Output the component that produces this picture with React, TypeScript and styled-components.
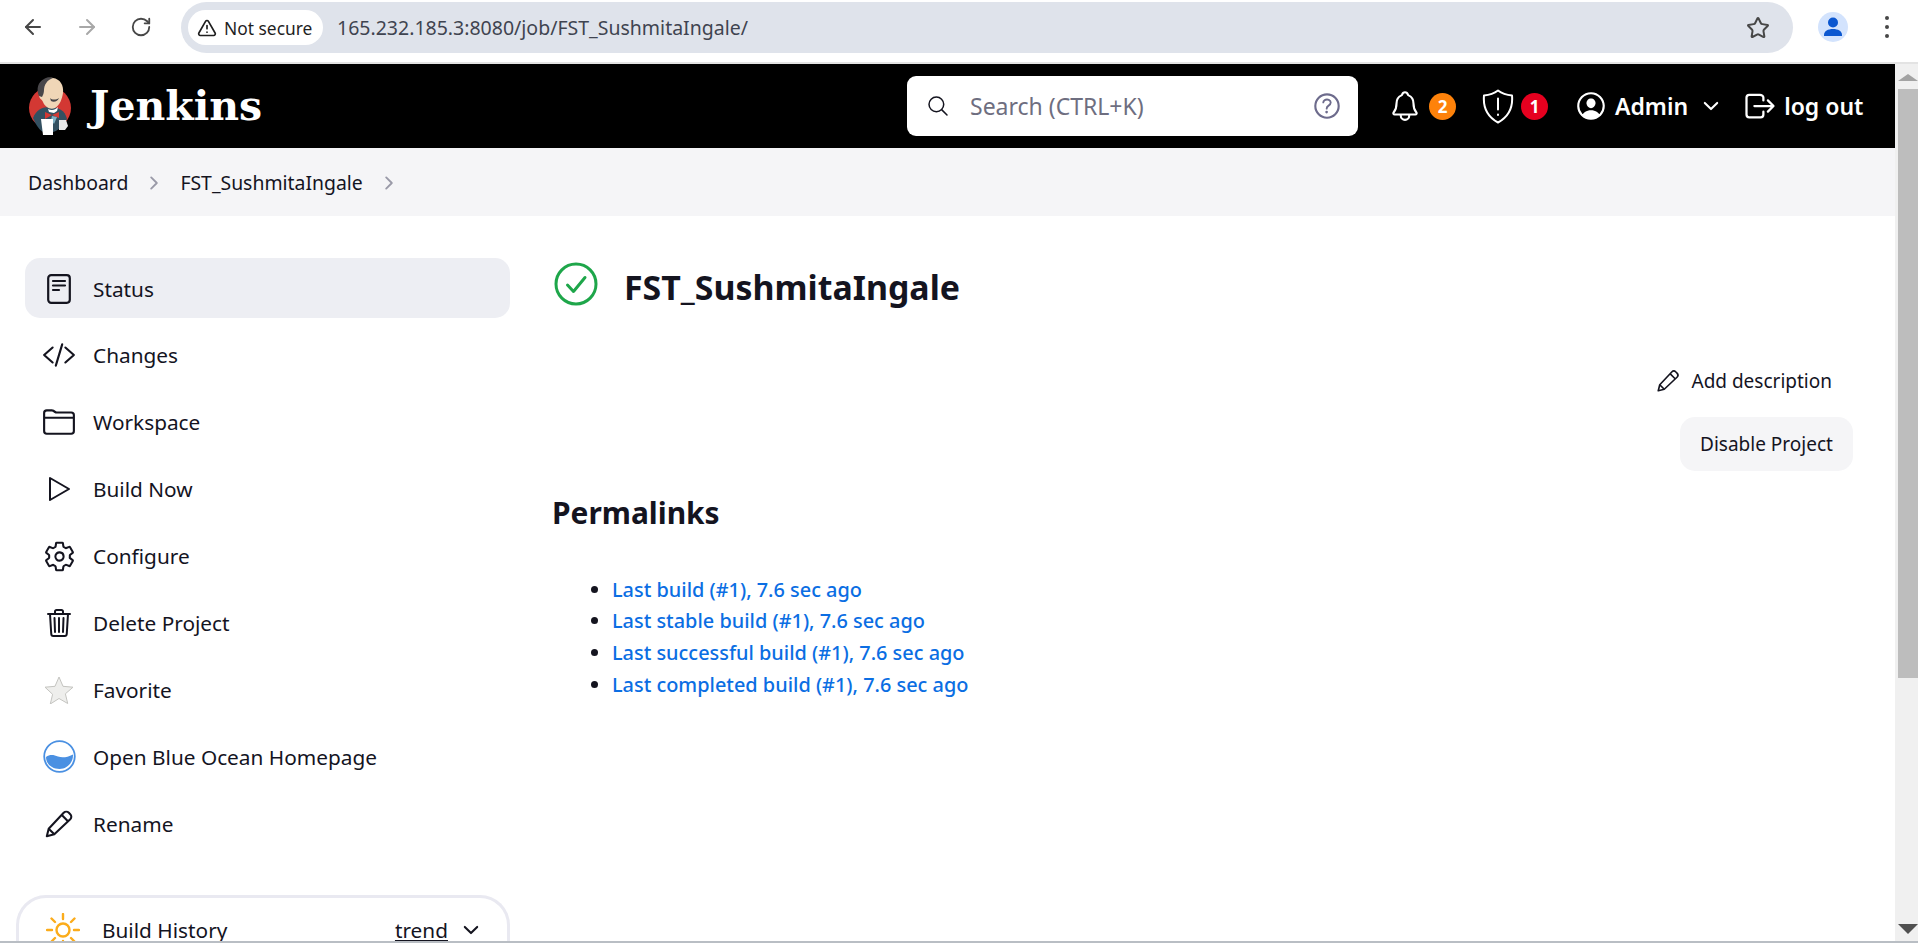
import React from "react";
import styled, { createGlobalStyle } from "styled-components";
import {
  IoChevronDownOutline,
  IoChevronForwardOutline,
  IoCodeSlashOutline,
  IoFolderOutline,
  IoHelpCircleOutline,
  IoLogOutOutline,
  IoNotificationsOutline,
  IoPersonCircleOutline,
  IoSearchOutline,
  IoSettingsOutline,
  IoTrashOutline,
} from "react-icons/io5";
import { ArrowLeft, ArrowRight, RotateCw, Star, TriangleAlert } from "lucide-react";

const GlobalStyle = createGlobalStyle`
  html, body {
    margin: 0;
    height: 943px;
    overflow: hidden;
    background: #fff;
  }
  body {
    font-family: "Noto Sans", "Open Sans", sans-serif;
    color: #14141f;
  }
`;

const Page = styled.div`
  display: flex;
  flex-direction: column;
  width: 1918px;
  height: 943px;
  overflow: hidden;
`;

const BrowserBar = styled.div`
  flex: none;
  display: flex;
  align-items: flex-start;
  height: 62px;
  border-bottom: 2px solid #e3e3e3;
  background: #fff;
`;

const NavButton = styled.div<{ $off?: boolean }>`
  flex: none;
  display: flex;
  align-items: center;
  justify-content: center;
  width: 54px;
  height: 54px;
  color: ${(p) => (p.$off ? "#a8a8a8" : "#474747")};
`;

const NavGroup = styled.div`
  display: flex;
  padding-left: 6px;
  width: 181px;
  flex: none;
  box-sizing: border-box;
`;

const Omnibox = styled.div`
  flex: none;
  display: flex;
  align-items: center;
  width: 1612px;
  height: 51px;
  margin-top: 2px;
  padding: 0 23px 0 7px;
  box-sizing: border-box;
  border-radius: 26px;
  background: #dfe3eb;
`;

const SecureChip = styled.div`
  flex: none;
  display: flex;
  align-items: center;
  gap: 7px;
  height: 35px;
  width: 135px;
  padding-left: 9px;
  box-sizing: border-box;
  border-radius: 18px;
  background: #fff;
  font-size: 17.4px;
  color: #1f1f1f;
`;

const UrlText = styled.div`
  flex: 1;
  margin-left: 14px;
  font-size: 19.5px;
  color: #3f4450;
`;

const ProfileSlot = styled.div`
  flex: none;
  display: flex;
  align-items: center;
  width: 125px;
  height: 54px;
  padding-left: 25px;
  box-sizing: border-box;
`;

const Avatar = styled.div`
  width: 30px;
  height: 30px;
  border-radius: 50%;
  background: #d3e3fd;
`;

const Dots = styled.div`
  display: flex;
  flex-direction: column;
  gap: 5px;
  margin-left: 37px;
`;

const Dot = styled.span`
  width: 4px;
  height: 4px;
  border-radius: 50%;
  background: #474747;
`;

const Viewport = styled.div`
  flex: 1;
  display: flex;
  min-height: 0;
`;

const Site = styled.div`
  flex: none;
  width: 1895px;
  display: flex;
  flex-direction: column;
  overflow: hidden;
`;

const Scrollbar = styled.div`
  flex: none;
  width: 23px;
  display: flex;
  flex-direction: column;
  align-items: center;
  background: #f0f0f0;
  padding-left: 2px;
  box-sizing: border-box;
`;

const ScrollArrow = styled.div<{ $down?: boolean }>`
  flex: none;
  width: 0;
  height: 0;
  border-left: 10px solid transparent;
  border-right: 10px solid transparent;
  ${(p) =>
    p.$down
      ? "border-top: 10px solid #505050; margin-top: auto; margin-bottom: 7px;"
      : "border-bottom: 7px solid #a3a3a3; margin-top: 10px;"}
`;

const ScrollThumb = styled.div`
  flex: none;
  width: 20px;
  height: 589px;
  margin-top: 8px;
  background: #bdbdbd;
`;

const BottomLine = styled.div`
  flex: none;
  height: 2px;
  background: #b9bec4;
`;

const Header = styled.header`
  flex: none;
  display: flex;
  align-items: center;
  height: 84px;
  background: #000;
  color: #fff;
`;

const Brand = styled.div`
  flex: none;
  display: flex;
  align-items: center;
  width: 907px;
  padding-left: 28px;
  box-sizing: border-box;
`;

const BrandName = styled.span`
  margin-left: 17px;
  font-family: "DejaVu Serif", "Liberation Serif", serif;
  font-weight: 700;
  font-size: 41px;
  line-height: 1;
`;

const SearchBox = styled.div`
  flex: none;
  display: flex;
  align-items: center;
  width: 451px;
  height: 60px;
  padding: 0 14px 0 19px;
  box-sizing: border-box;
  border-radius: 9px;
  background: #fff;
  color: #14141f;
`;

const SearchHint = styled.span`
  flex: 1;
  margin-left: 20px;
  font-size: 23px;
  color: #6e6e80;
`;

const HeaderActions = styled.div`
  flex: none;
  display: flex;
  align-items: center;
  margin-left: 30px;
`;

const CountBadge = styled.span<{ $tone: string }>`
  display: flex;
  align-items: center;
  justify-content: center;
  width: 27px;
  height: 27px;
  border-radius: 50%;
  margin: 0 26px 0 7px;
  background: ${(p) => p.$tone};
  font-size: 17px;
  font-weight: 700;
`;

const HeaderLabel = styled.span<{ $gap: number }>`
  font-size: 23px;
  font-weight: 600;
  margin-left: ${(p) => p.$gap}px;
`;

const MenuChevron = styled(IoChevronDownOutline)`
  margin-left: 12px;
`;

const LogoutIcon = styled(IoLogOutOutline)`
  margin-left: 20px;
`;

const Breadcrumbs = styled.nav`
  flex: none;
  display: flex;
  align-items: center;
  height: 68px;
  padding: 1px 0 0 28px;
  box-sizing: border-box;
  background: #f5f5f7;
  font-size: 19.4px;
`;

const CrumbArrow = styled.span`
  display: flex;
  margin: 0 16px;
  color: #9a9aa8;
`;

const Body = styled.div`
  flex: 1;
  display: flex;
  min-height: 0;
`;

const Sidebar = styled.aside`
  flex: none;
  width: 553px;
  padding: 42px 0 0 16px;
  box-sizing: border-box;
`;

const TaskList = styled.div`
  display: flex;
  flex-direction: column;
  gap: 6.9px;
  width: 494px;
`;

const Task = styled.a<{ $active?: boolean }>`
  display: flex;
  align-items: center;
  height: 60px;
  margin-left: 9px;
  padding: 1px 0 0 17px;
  box-sizing: border-box;
  border-radius: 15px;
  background: ${(p) => (p.$active ? "#edeef3" : "transparent")};
  font-size: 20.8px;
  color: #14141f;
`;

const TaskIcon = styled.span`
  flex: none;
  display: flex;
  align-items: center;
  justify-content: center;
  width: 34px;
  height: 34px;
  margin-right: 17px;
`;

const HistoryCard = styled.div`
  display: flex;
  align-items: center;
  width: 494px;
  height: 80px;
  margin-top: 42px;
  padding: 0 25px 13px 27px;
  box-sizing: border-box;
  border: 3px solid #e9e9f1;
  border-bottom: none;
  border-radius: 30px 30px 0 0;
  font-size: 20.8px;
`;

const HistoryTitle = styled.span`
  flex: 1;
  margin-left: 22px;
`;

const TrendLink = styled.a`
  text-decoration: underline;
  text-underline-offset: 2px;
  margin-right: 12px;
`;

const Content = styled.main`
  flex: 1;
  min-width: 0;
  padding: 46px 42px 0 0;
`;

const TitleRow = styled.div`
  display: flex;
  align-items: center;
  height: 44px;
  margin-left: 1px;
`;

const JobTitle = styled.h1`
  margin: 0 0 0 26px;
  padding-top: 6px;
  font-size: 33.9px;
  font-weight: 700;
  line-height: 1.2;
`;

const SideActions = styled.div`
  display: flex;
  flex-direction: column;
  align-items: flex-end;
  margin-top: 53px;
`;

const DescriptionLink = styled.a`
  display: flex;
  align-items: center;
  height: 44px;
  margin-right: 21px;
  font-size: 19px;
`;

const PencilSlot = styled.span`
  display: flex;
  margin-right: 11px;
`;

const DisableButton = styled.button`
  width: 173px;
  height: 54px;
  margin-top: 14px;
  border: none;
  border-radius: 15px;
  background: #f5f5f7;
  font: 400 19px "Noto Sans", sans-serif;
  color: #14141f;
`;

const SectionTitle = styled.h2`
  margin: 24px 0 0 -1px;
  font-size: 29.9px;
  font-weight: 700;
  line-height: 1.2;
`;

const LinkList = styled.ul`
  margin: 43px 0 0;
  padding-left: 59px;
  font-size: 19.9px;
  line-height: 31.6px;
`;

const PermaLink = styled.a`
  color: #0b6ee3;
  font-weight: 500;
`;

// Jenkins butler, rough drawing of the header logo
const JenkinsLogo = () => (
  <svg width="45" height="60" viewBox="0 0 45 60">
    <circle cx="22" cy="32" r="21" fill="#d33833" />
    <path d="M5 42c3-8 9-11 17-11s15 3 17 12c-5 9-12 14-19 14S9 51 5 42z" fill="#335061" />
    <path d="M11 14C12 5 18 1 25 2c7 1 11 7 10 15-1 6-3 12-8 15-5 2-10-1-12-6-1-3-4-3-4-7 0-2 0-4 0-5z" fill="#f0d6b7" />
    <path d="M11 20C8 13 10 6 16 3c3-2 6-2 9-1-6 2-9 7-9 12 0 3-1 5-2 7z" fill="#49474a" />
    <path d="M20 33c4 2 7 1 10-2l-1 4-3 2-5-1z" fill="#fff" />
    <path d="M17 36l7 3 7-3 0 6-7-3-7 4z" fill="#d33833" />
    <path d="M24 40l5 1-3 7-3-4z" fill="#81b0c4" />
    <path d="M22 22c2 2 6 2 9 0-1 3-5 5-8 3z" fill="#49474a" />
    <path d="M13 43h12v16H15z" fill="#fff" />
    <path d="M31 44h7l2 6-3 4h-6z" fill="#e8e8e8" />
  </svg>
);

const StatusIcon = () => (
  <svg width="24" height="30" viewBox="0 0 24 30" fill="none" stroke="#14141f" strokeWidth="2.2" strokeLinecap="round">
    <rect x="1.2" y="1.2" width="21.6" height="27.6" rx="3" />
    <path d="M6 7h12M6 11.5h12M6 16h6" />
  </svg>
);

const PlayIcon = () => (
  <svg width="24" height="26" viewBox="0 0 24 26" fill="none" stroke="#14141f" strokeWidth="2" strokeLinejoin="round">
    <path d="M3 2l19 11L3 24z" />
  </svg>
);

const PencilIcon = ({ size }: { size: number }) => (
  <svg width={size} height={size} viewBox="0 0 32 32" fill="none" stroke="#14141f" strokeWidth="2.2" strokeLinejoin="round">
    <path d="M3 29l2-8L21 4c1.500-1.500 4-1.500 5.500 0l1.500 1.500c1.500 1.500 1.500 4 0 5.500L11 27z" />
    <path d="M5 21l6 6M19 6.500l6.500 6.500" />
  </svg>
);

const StarIcon = () => (
  <svg width="30" height="28" viewBox="0 0 30 28">
    <path d="M15 1l4 9.3 10 .9-7.600 6.600 2.300 9.700L15 22.500l-8.700 5.500 2.300-9.700L1 11.200l10-.9z" fill="#eeeeec" stroke="#c4c4c0" strokeWidth="1" />
  </svg>
);

const OceanIcon = () => (
  <svg width="33" height="33" viewBox="0 0 33 33">
    <circle cx="16.500" cy="16.500" r="15.300" fill="#fff" stroke="#4a90e2" strokeWidth="1.800" />
    <path d="M3 17c4-3 8-2 12-.5s9 1 15-2c.5 8-6 14.500-13.500 14.500S3 24 3 17z" fill="#4a90e2" />
  </svg>
);

const SunIcon = () => (
  <svg width="34" height="34" viewBox="0 0 34 34" fill="none" stroke="#fbac1b" strokeWidth="2.400" strokeLinecap="round">
    <circle cx="17" cy="17" r="6.500" />
    <path d="M17 1v5M17 28v5M1 17h5M28 17h5M5.500 5.500l3.500 3.500M25 25l3.500 3.500M5.500 28.500L9 25M25 9l3.500-3.500" />
  </svg>
);

const ShieldIcon = () => (
  <svg width="32" height="35" viewBox="0 0 32 35" fill="none" stroke="#fff" strokeWidth="2" strokeLinecap="round" strokeLinejoin="round">
    <path d="M16 1.500c4 3 9 4.500 14 5 1 11-3 21-14 27C5 27.500 1 17.500 2 6.500c5-.5 10-2 14-5z" />
    <path d="M16 9.500v11M16 25.500v.4" />
  </svg>
);

const CheckIcon = () => (
  <svg width="44" height="44" viewBox="0 0 44 44" fill="none" stroke="#1ea64a" strokeLinecap="round" strokeLinejoin="round">
    <circle cx="22" cy="22" r="20" strokeWidth="3" />
    <path d="M13.500 23l6 6.500L31 15.500" strokeWidth="3" />
  </svg>
);

const ChromeAvatar = () => (
  <Avatar>
    <svg width="30" height="30" viewBox="0 0 30 30" fill="#0b57d0">
      <circle cx="15" cy="10.500" r="5" />
      <path d="M6 23c0-4 4-6 9-6s9 2 9 6v1H6z" />
    </svg>
  </Avatar>
);

const tasks = [
  { label: "Status", icon: <StatusIcon />, active: true },
  { label: "Changes", icon: <IoCodeSlashOutline size={34} /> },
  { label: "Workspace", icon: <IoFolderOutline size={36} /> },
  { label: "Build Now", icon: <PlayIcon /> },
  { label: "Configure", icon: <IoSettingsOutline size={33} /> },
  { label: "Delete Project", icon: <IoTrashOutline size={32} /> },
  { label: "Favorite", icon: <StarIcon /> },
  { label: "Open Blue Ocean Homepage", icon: <OceanIcon /> },
  { label: "Rename", icon: <PencilIcon size={30} /> },
];

const permalinks = [
  "Last build (#1), 7.6 sec ago",
  "Last stable build (#1), 7.6 sec ago",
  "Last successful build (#1), 7.6 sec ago",
  "Last completed build (#1), 7.6 sec ago",
];

const App = () => {
  return (
    <Page>
      <GlobalStyle />
      <BrowserBar>
        <NavGroup>
          <NavButton>
            <ArrowLeft size={24} />
          </NavButton>
          <NavButton $off>
            <ArrowRight size={24} />
          </NavButton>
          <NavButton>
            <RotateCw size={22} />
          </NavButton>
        </NavGroup>
        <Omnibox>
          <SecureChip>
            <TriangleAlert size={20} />
            Not secure
          </SecureChip>
          <UrlText>165.232.185.3:8080/job/FST_SushmitaIngale/</UrlText>
          <Star size={24} color="#474747" />
        </Omnibox>
        <ProfileSlot>
          <ChromeAvatar />
          <Dots>
            <Dot />
            <Dot />
            <Dot />
          </Dots>
        </ProfileSlot>
      </BrowserBar>
      <Viewport>
        <Site>
          <Header>
            <Brand>
              <JenkinsLogo />
              <BrandName>Jenkins</BrandName>
            </Brand>
            <SearchBox>
              <IoSearchOutline size={24} />
              <SearchHint>Search (CTRL+K)</SearchHint>
              <IoHelpCircleOutline size={34} color="#6d6b8c" />
            </SearchBox>
            <HeaderActions>
              <IoNotificationsOutline size={34} />
              <CountBadge $tone="#fe820a">2</CountBadge>
              <ShieldIcon />
              <CountBadge $tone="#e6001f">1</CountBadge>
              <IoPersonCircleOutline size={34} />
              <HeaderLabel $gap={7}>Admin</HeaderLabel>
              <MenuChevron size={22} />
              <LogoutIcon size={36} />
              <HeaderLabel $gap={6}>log out</HeaderLabel>
            </HeaderActions>
          </Header>
          <Breadcrumbs>
            Dashboard
            <CrumbArrow>
              <IoChevronForwardOutline size={20} />
            </CrumbArrow>
            FST_SushmitaIngale
            <CrumbArrow>
              <IoChevronForwardOutline size={20} />
            </CrumbArrow>
          </Breadcrumbs>
          <Body>
            <Sidebar>
              <TaskList>
                {tasks.map((task) => (
                  <Task key={task.label} $active={task.active}>
                    <TaskIcon>{task.icon}</TaskIcon>
                    {task.label}
                  </Task>
                ))}
              </TaskList>
              <HistoryCard>
                <SunIcon />
                <HistoryTitle>Build History</HistoryTitle>
                <TrendLink>trend</TrendLink>
                <IoChevronDownOutline size={22} />
              </HistoryCard>
            </Sidebar>
            <Content>
              <TitleRow>
                <CheckIcon />
                <JobTitle>FST_SushmitaIngale</JobTitle>
              </TitleRow>
              <SideActions>
                <DescriptionLink>
                  <PencilSlot>
                    <PencilIcon size={24} />
                  </PencilSlot>
                  Add description
                </DescriptionLink>
                <DisableButton>Disable Project</DisableButton>
              </SideActions>
              <SectionTitle>Permalinks</SectionTitle>
              <LinkList>
                {permalinks.map((text) => (
                  <li key={text}>
                    <PermaLink>{text}</PermaLink>
                  </li>
                ))}
              </LinkList>
            </Content>
          </Body>
        </Site>
        <Scrollbar>
          <ScrollArrow />
          <ScrollThumb />
          <ScrollArrow $down />
        </Scrollbar>
      </Viewport>
      <BottomLine />
    </Page>
  );
};

export default App;
